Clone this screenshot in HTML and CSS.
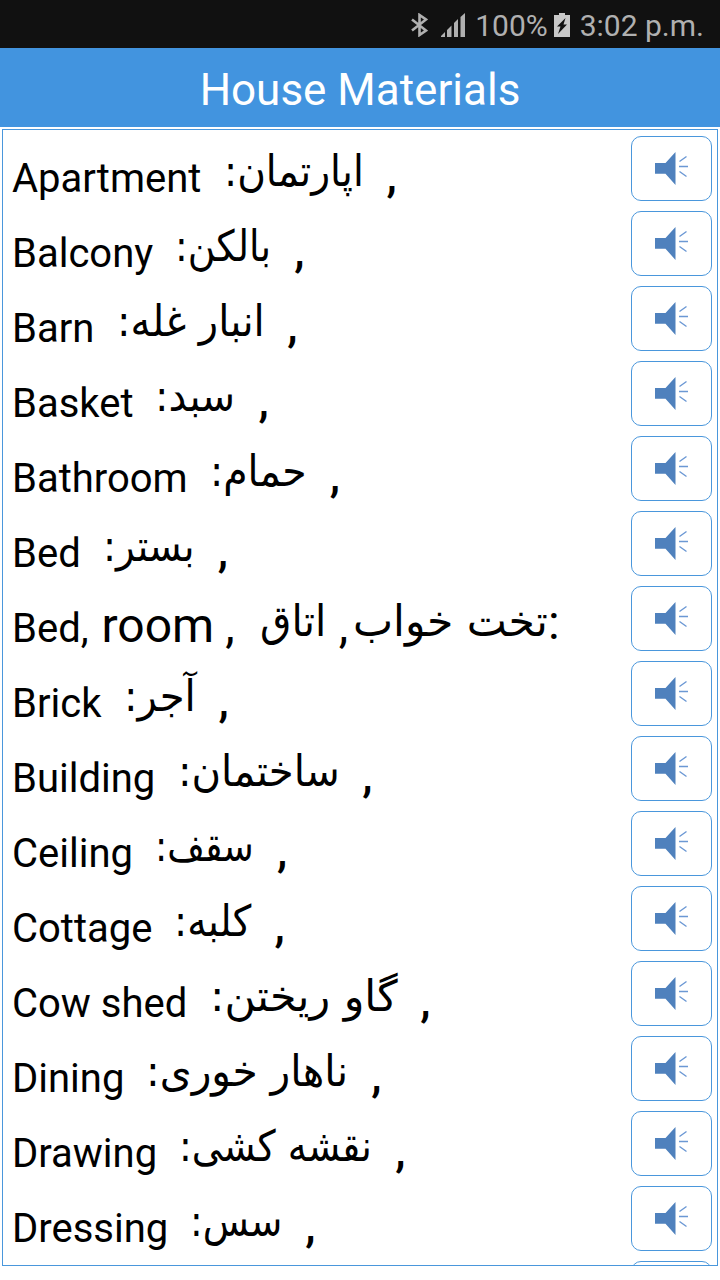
FILE: index.html
```html
<!DOCTYPE html>
<html lang="en">

<head>
  <meta charset="UTF-8">
  <meta name="viewport" content="width=device-width, initial-scale=1.0">
  <title>House Materials</title>
  <link rel="stylesheet" href="styles.css">
</head>

<body>

<div class="status-bar">
  <svg class="bluetooth" width="17" height="24" viewBox="0 0 17 24">
    <path d="M1 6.500l14 11-6.500 4.500V2l6.500 4.500L1 17.500" fill="none" stroke="#b0b0b0" stroke-width="2.600"/>
  </svg>
  <svg class="signal" width="25" height="24" viewBox="0 0 25 24">
    <path d="M0 24v-1l4-4v5zM6 24v-7l4.500-4.500v11.500zM13 24v-14l4-4v18zM19.500 24v-20l4.500-4v24z" fill="#b0b0b0"/>
  </svg>
  <span class="percent">100%</span>
  <svg class="battery" width="16" height="24" viewBox="0 0 16 24">
    <path d="M0 2h5V0h6v2h5v22H0z" fill="#c8c8c8"/>
    <path d="M11.500 5L3 13.500h3.500L4 21l9-9.500H9.500z" fill="#111"/>
  </svg>
  <span class="time">3:02 p.m.</span>
</div>

<header class="title-bar">
  <h1>House Materials</h1>
</header>

<main class="word-list" id="wordList"></main>

<template id="soundButton">
  <button class="sound" aria-label="Play">
    <svg width="34" height="34" viewBox="0 0 34 34">
      <path d="M0 11h10.500L20.500 0v33L10.500 21.700H0z" fill="#4f81bd"/>
      <path d="M24.500 9.500l7-5M24 14.500h9M24.500 19.500l7 5" fill="none" stroke="#6b98d4" stroke-width="1.400"/>
    </svg>
  </button>
</template>

<script>
  // word, translation, width of the translation column
  const words = [
    ["Apartment", "اپارتمان:", 140],
    ["Balcony", "بالکن:", 96],
    ["Barn", "انبار غله:", 148],
    ["Basket", "سبد:", 80],
    ["Bathroom", "حمام:", 97],
    ["Bed", "بستر:", 92],
    null,
    ["Brick", "آجر:", 72],
    ["Building", "ساختمان:", 162],
    ["Ceiling", "سقف:", 99],
    ["Cottage", "کلبه:", 77],
    ["Cow shed", "گاو ریختن:", 188],
    ["Dining", "ناهار خوری:", 202],
    ["Drawing", "نقشه کشی:", 193],
    ["Dressing", "سس:", 92],
    ["", "", 0]
  ];

  const list = document.getElementById("wordList");
  const sound = document.getElementById("soundButton");

  function persian(text, width) {
    return '<span class="fa" dir="rtl" lang="fa" style="width: ' + width + 'px"><span class="fa-text">' + text + '</span></span>';
  }

  words.forEach(function (item) {
    const row = document.createElement("div");
    row.className = "row";
    if (item === null) {
      row.innerHTML = '<p class="entry"><span class="word">Bed,</span><span class="large room">room</span>' +
        '<span class="large mid-comma">,</span>' + persian("اتاق", 66) +
        '<span class="large fa-comma">,</span>' + persian("تخت خواب", 195) + '<span class="large colon">:</span></p>';
    } else {
      row.innerHTML = '<p class="entry"><span class="word">' + item[0] + '</span>' +
        (item[1] ? '<span class="gap"></span>' + persian(item[1], item[2]) + '<span class="large comma">,</span>' : '') + '</p>';
    }
    row.appendChild(sound.content.cloneNode(true));
    list.appendChild(row);
  });

  // squeeze each translation into its column
  document.querySelectorAll(".fa").forEach(function (box) {
    const text = box.firstChild;
    text.style.transform = "scaleX(" + box.offsetWidth / text.offsetWidth + ")";
  });
</script>

</body>

</html>
```
FILE: styles.css
```css
* {
  box-sizing: border-box;
}

body {
  margin: 0;
  height: 1280px;
  overflow: hidden;
  background-color: white;
  color: black;
  font-family: Roboto, "DejaVu Sans", sans-serif;
}

.status-bar {
  display: flex;
  align-items: center;
  justify-content: flex-end;
  height: 48px;
  padding: 2px 16px 0 0;
  background-color: #111;
  color: #b0b0b0;
  font-size: 30px;
}

.signal {
  margin-left: 13px;
}

.percent {
  margin-left: 9px;
}

.battery {
  margin: 0 10px 0 6px;
}

.title-bar {
  height: 79px;
  background-color: #4294df;
  color: white;
  text-align: center;
}

.title-bar h1 {
  margin: 0;
  font-size: 44px;
  font-weight: 400;
  line-height: 85px;
}

.word-list {
  height: 1137px;
  margin: 2px 2px 0;
  padding: 1px 5px 0 9px;
  border: 1px solid #4a97dc;
  overflow: hidden;
}

.row {
  display: flex;
  align-items: flex-start;
  justify-content: space-between;
  height: 75px;
  padding-top: 5px;
}

.entry {
  display: flex;
  align-items: baseline;
  margin: 0;
  height: 65px;
  line-height: 80px;
  font-size: 40px;
  white-space: pre;
}

.gap {
  width: 22px;
}

.fa {
  display: flex;
  position: relative;
  top: -6px;
  font-family: "DejaVu Sans", sans-serif;
  font-size: 43px;
}

.fa-text {
  flex: none;
  transform-origin: right;
}

.large {
  font-size: 48px;
}

.comma {
  margin-left: 23px;
  font-size: 46px;
  font-weight: 500;
  position: relative;
  top: -1px;
}

.room {
  margin-left: 13px;
}

.mid-comma {
  margin: 0 26px 0 11px;
}

.fa-comma {
  margin: 0 5px 0 12px;
}

.colon {
  position: relative;
  top: -3px;
}

.sound {
  display: flex;
  flex: none;
  width: 81px;
  height: 65px;
  padding: 15px 0 0 23px;
  border: 1px solid #4a97dc;
  border-radius: 10px;
  background-color: white;
}
```
